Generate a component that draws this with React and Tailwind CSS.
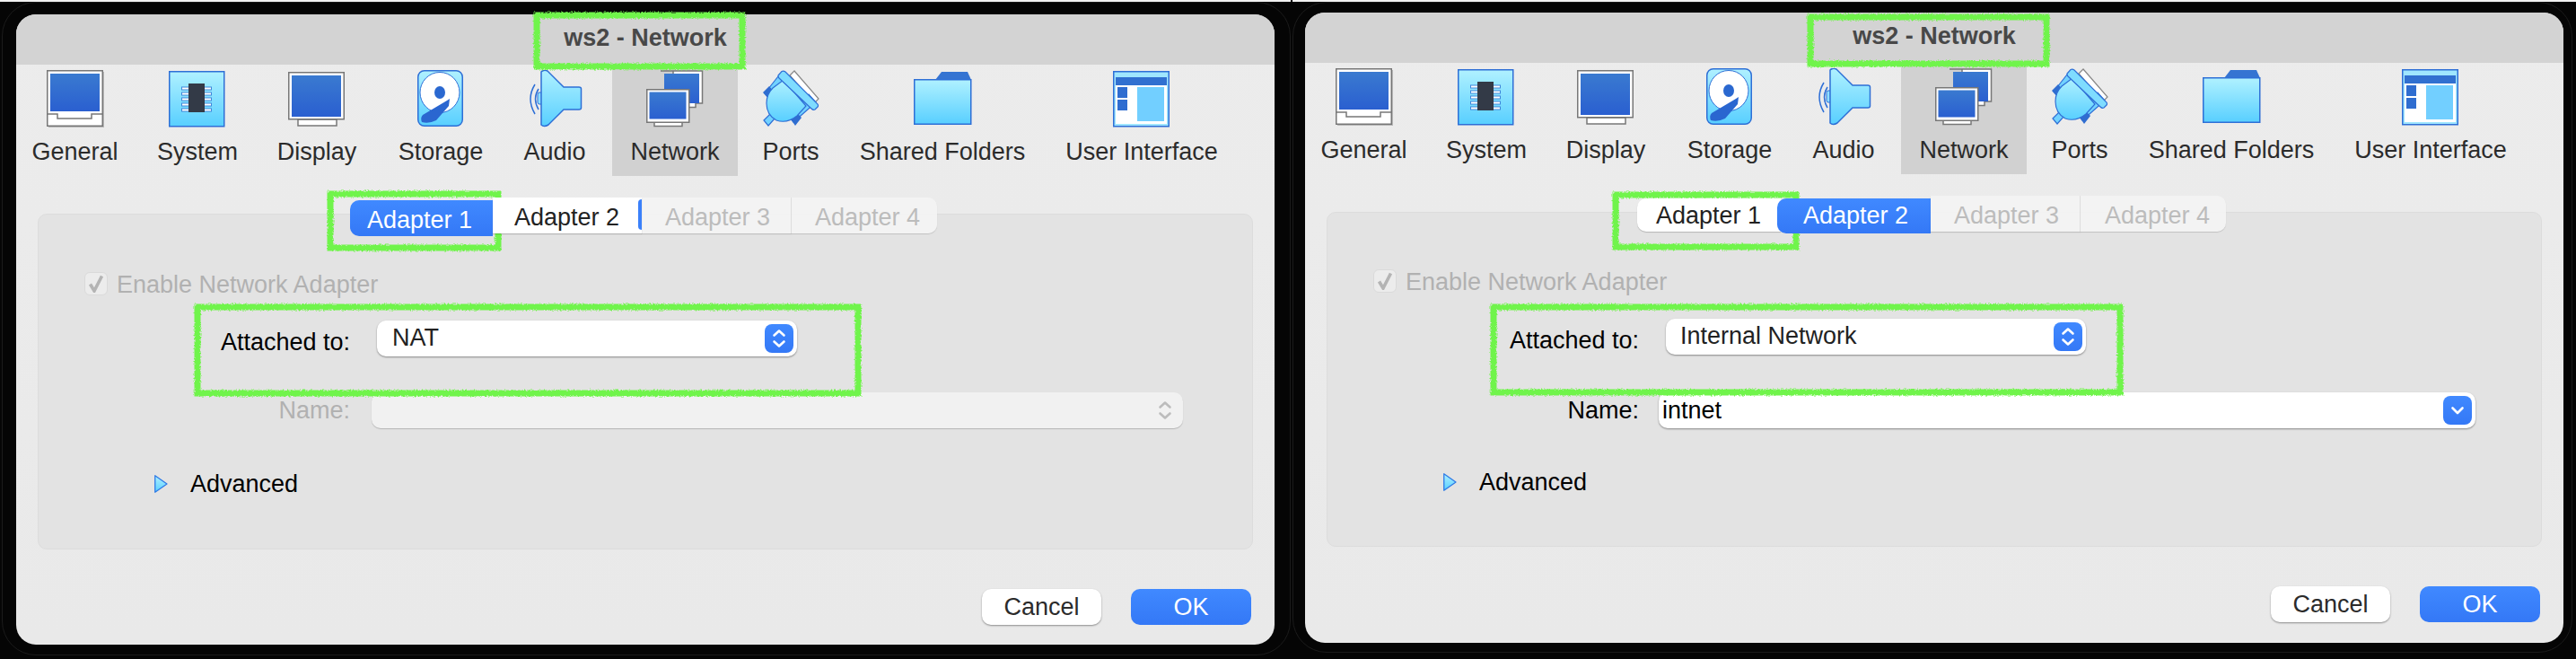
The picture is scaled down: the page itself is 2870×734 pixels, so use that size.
import React from "react";

function Defs() {
    return (
        <svg width="0" height="0" className="absolute">
            <defs>
                <linearGradient id="screen" x1="0" y1="0" x2="0" y2="1">
                    <stop offset="0" stopColor="#3a7ad0" />
                    <stop offset="1" stopColor="#2a5fd0" />
                </linearGradient>
                <linearGradient id="sky" x1="0" y1="0" x2="0" y2="1">
                    <stop offset="0" stopColor="#b0f1ff" />
                    <stop offset="1" stopColor="#58cfff" />
                </linearGradient>
                <filter id="rough" x="-2%" y="-10%" width="104%" height="120%">
                    <feTurbulence type="fractalNoise" baseFrequency="0.55" numOctaves="2" seed="4" />
                    <feDisplacementMap in="SourceGraphic" scale="4" />
                </filter>
            </defs>
        </svg>
    );
}

const GeneralIcon = () => (
    <svg width="64" height="64" viewBox="0 0 64 64">
        <rect x="2" y="2" width="62" height="62" fill="#b8b8b8" />
        <rect x="0.75" y="0.75" width="61.5" height="61.5" fill="#fff" stroke="#777" strokeWidth="1.5" />
        <rect x="4" y="4" width="55" height="42" fill="url(#screen)" />
        <path d="M1 49H12V54H50V49H62" fill="none" stroke="#777" strokeWidth="1.5" />
    </svg>
);

const SystemIcon = () => (
    <svg width="64" height="64" viewBox="0 0 64 64">
        <rect x="0.75" y="1.75" width="61" height="61" fill="url(#sky)" stroke="#2e6fd6" strokeWidth="1.5" />
        {[19, 25, 31, 37, 43].map((y) => (
            <g key={y}>
                <rect x="14.5" y={y} width="33" height="3" fill="#fff" stroke="#3f86da" strokeWidth="1" />
            </g>
        ))}
        <rect x="22" y="15" width="18" height="32" fill="#333a47" />
    </svg>
);

const DisplayIcon = () => (
    <svg width="64" height="64" viewBox="0 0 64 64">
        <path d="M11 55H54V62H11Z" fill="#fff" stroke="#777" strokeWidth="1.5" />
        <rect x="0.75" y="2.75" width="61.5" height="52" fill="#fff" stroke="#777" strokeWidth="1.5" />
        <rect x="4" y="6" width="55" height="46" fill="url(#screen)" />
    </svg>
);

const StorageIcon = () => (
    <svg width="52" height="64" viewBox="0 0 52 64">
        <rect x="0.75" y="0.75" width="49.5" height="61.5" rx="7" fill="url(#sky)" stroke="#2e6fd6" strokeWidth="1.5" />
        <ellipse cx="25" cy="25" rx="22" ry="22.5" fill="#fff" stroke="#2e6fd6" strokeWidth="1" />
        <ellipse cx="25" cy="25" rx="6" ry="7" fill="#2a68d0" />
        <path d="M33 34L36 32L35 40L21 56Q13 60 5 58Q3 53 6 50Z" fill="#2a66d0" />
    </svg>
);

const AudioIcon = () => (
    <svg width="62" height="64" viewBox="0 0 62 64">
        <path d="M9 16Q-1 32 9 49M13 21Q6 32 13 44" fill="none" stroke="#2e6fd6" strokeWidth="1.5" />
        <rect x="12" y="25" width="6" height="13" rx="2" fill="#8fdfff" stroke="#2e6fd6" />
        <path d="M16 2Q19 -1 23 1L41 19H58Q60.5 19 60.5 21V42Q60.5 44 58 44H41L24 61Q19 64 16 61Z" fill="url(#sky)" stroke="#2e6fd6" strokeWidth="1.5" />
    </svg>
);

const NetworkIcon = () => (
    <svg width="64" height="64" viewBox="0 0 64 64">
        <path d="M16 1H62.5V37H55V41.5H30V1Z" fill="#fff" stroke="#777" strokeWidth="1.5" />
        <rect x="20" y="4" width="39" height="33" fill="url(#screen)" />
        <path d="M9 58H40V62.5H9Z" fill="#fff" stroke="#777" strokeWidth="1.5" />
        <rect x="0.75" y="21.75" width="47" height="36.5" fill="#fff" stroke="#777" strokeWidth="1.5" />
        <rect x="3.5" y="24.5" width="41" height="30" fill="url(#screen)" />
    </svg>
);

const PortsIcon = () => (
    <svg width="64" height="64" viewBox="0 0 64 64">
        <path d="M31 6L36 1L63 32L58 37Z" fill="#fff" stroke="#888" strokeWidth="1.2" />
        <path d="M3 26L18 7L27 15L11 34Z" fill="#72d2ff" stroke="#2e6fd6" strokeWidth="1.2" />
        <path d="M1 25L8 18L15 26L8 33Z" fill="#2f6dd0" />
        <path d="M35 58L60 36L52 27L28 50Z" fill="#72d2ff" stroke="#2e6fd6" strokeWidth="1.2" />
        <path d="M30 52L37 46L44 53L37 62Z" fill="#2f6dd0" />
        <path d="M2 56L10 48L15 53L7 62Z" fill="#72d2ff" stroke="#2e6fd6" strokeWidth="1.2" />
        <path d="M24 11L49 40L39 51Q28 60 16 56Q5 50 5 37Q5 27 12 20Z" fill="url(#sky)" stroke="#2e6fd6" strokeWidth="1.2" />
        <path d="M18 6L22 1.5Q24 0.5 26 2L62 38Q63 40 62 41L59 44Q57 45 55 43L19 9Q18 8 18 6Z" fill="#7fdcff" stroke="#2e6fd6" strokeWidth="1.2" />
    </svg>
);

const FolderIcon = () => (
    <svg width="65" height="64" viewBox="0 0 65 64">
        <path d="M24 11L31 2H60L64 11Z" fill="#3574d2" />
        <rect x="0.75" y="10.75" width="63" height="49.5" fill="url(#sky)" stroke="#2e6fd6" strokeWidth="1.5" />
    </svg>
);

const InterfaceIcon = () => (
    <svg width="64" height="64" viewBox="0 0 64 64">
        <rect x="0.75" y="1.75" width="61.5" height="61" fill="#9fe6ff" stroke="#2e6fd6" strokeWidth="1.5" />
        <rect x="3" y="17" width="57" height="43" fill="#fff" />
        <rect x="3" y="8" width="57" height="9" fill="#3170d0" />
        <rect x="5" y="19" width="11" height="12" fill="#2f6dd0" />
        <rect x="5" y="33" width="11" height="12" fill="#2f6dd0" />
        <rect x="27" y="19" width="30" height="38" fill="#72cfff" />
    </svg>
);

const items = [
    { label: "General", Icon: GeneralIcon, width: "w-[131px]" },
    { label: "System", Icon: SystemIcon, width: "w-[142px]" },
    { label: "Display", Icon: DisplayIcon, width: "w-[124px]" },
    { label: "Storage", Icon: StorageIcon, width: "w-[152px]" },
    { label: "Audio", Icon: AudioIcon, width: "w-[102px] mr-[13px]" },
    { label: "Network", Icon: NetworkIcon, width: "w-[140px] bg-[#d1d1d1]" },
    { label: "Ports", Icon: PortsIcon, width: "w-[118px]" },
    { label: "Shared Folders", Icon: FolderIcon, width: "w-[220px]" },
    { label: "User Interface", Icon: InterfaceIcon, width: "w-[224px]" },
];

function Toolbar() {
    return (
        <div className="flex h-[124px]">
            {items.map(({ label, Icon, width }) => (
                <div key={label} className={`flex flex-col items-center pt-[6px] ${width}`}>
                    <div className="h-[64px] flex justify-center"><Icon /></div>
                    <span className="mt-[11px] leading-[32px] text-[#2b2b2b] whitespace-nowrap">{label}</span>
                </div>
            ))}
        </div>
    );
}

const Chevrons = ({ down, up, color = "#fff" }) => (
    <svg width="32" height="32" viewBox="0 0 32 32" fill="none" stroke={color} strokeWidth="2.6" strokeLinecap="round" strokeLinejoin="round">
        {up && <path d="M10.5 12.5L16 7.5L21.5 12.5" />}
        {down && up && <path d="M10.5 19.5L16 24.5L21.5 19.5" />}
        {down && !up && <path d="M10.5 13.5L16 19L21.5 13.5" />}
    </svg>
);

const BlueBox = ({ children }) => (
    <div className="w-[32px] h-[32px] rounded-[8px] bg-gradient-to-b from-[#4089ff] to-[#3478f6]">{children}</div>
);

function Checkbox({ text }) {
    return (
        <div className="flex items-center h-[26px] pl-[51px] gap-[10px]">
            <div className="w-[26px] h-[26px] rounded-[6px] bg-[#ececec] border border-[#dadada] flex items-center justify-center">
                <svg width="18" height="20" viewBox="0 0 18 20" fill="none" stroke="#b4b4b4" strokeWidth="3.6">
                    <path d="M2.5 10.5L7 18L15.5 1.5" />
                </svg>
            </div>
            <span className="text-[#b1b1b1] leading-[30px] mt-[2px]">{text}</span>
        </div>
    );
}

function Advanced({ className }) {
    return (
        <div className={`flex items-center h-[32px] pl-[129px] gap-[25px] text-black ${className}`}>
            <svg width="15" height="20" viewBox="0 0 15 20">
                <path d="M0.75 0.75L14 10L0.75 19.25Z" fill="url(#sky)" stroke="#2e7ae6" strokeWidth="1.3" strokeLinejoin="round" />
            </svg>
            <span>Advanced</span>
        </div>
    );
}

function Footer() {
    return (
        <div className="flex justify-end pr-[26px] gap-[33px] mt-[44px]">
            <button className="w-[133px] h-[40px] rounded-[10px] bg-white text-[#2b2b2b] shadow-[0_1px_2px_rgba(0,0,0,0.4)]">Cancel</button>
            <button className="w-[134px] h-[40px] rounded-[10px] bg-gradient-to-b from-[#4089ff] to-[#3478f6] text-white">OK</button>
        </div>
    );
}

function GreenBox({ className }) {
    return (
        <svg className={`absolute overflow-visible ${className}`} width="100%" height="100%">
            <rect x="3" y="3" width="calc(100% - 6px)" height="calc(100% - 6px)" fill="none" stroke="#70f44c" strokeWidth="7" filter="url(#rough)" />
        </svg>
    );
}

function Window({ className, tabs, panelClass, children, greens, frame }) {
    return (
        <div className={`relative shrink-0 w-[1402px] h-[702px] rounded-[22px] overflow-visible ${className}`}>
            <div className={`absolute border border-[#1b1b1b] rounded-[38px] ${frame}`} />
            <div className="relative h-full rounded-[22px] overflow-hidden bg-gradient-to-b from-[#ececec] to-[#e9e9e9]">
                <div className="h-[56px] bg-[#d3d3d3] flex items-center justify-center font-bold text-[#484848] text-[27px] pb-[3px]">
                    ws2 - Network
                </div>
                <Toolbar />
                <div className="relative z-10 h-[40px] mt-[24px] flex items-start">{tabs}</div>
                <div className={`mx-[24px] -mt-[22px] bg-[#e3e3e3] border border-[#dcdcdc] rounded-[10px] ${panelClass}`}>
                    {children}
                </div>
                <Footer />
            </div>
            {greens}
        </div>
    );
}

const tabBase = "h-[40px] leading-[44px] whitespace-nowrap";
const offTab = "bg-[#f4f4f4]/90 text-[#bcbcbc] shadow-[0_1px_1px_rgba(0,0,0,0.15)]";

const LeftTabs = (
    <>
        <div className="w-[372px] shrink-0" />
        <div className={`${tabBase} mt-[3px] w-[159px] pl-[19px] rounded-l-[10px] bg-gradient-to-b from-[#4089ff] to-[#3478f6] text-white`}>Adapter 1</div>
        <div className={`${tabBase} relative w-[166px] pl-[24px] bg-white text-[#222] shadow-[0_1px_1px_rgba(0,0,0,0.2)]`}>
            Adapter 2
            <div className="absolute right-0 top-[2px] w-[4px] h-[34px] rounded-l-[4px] bg-[#3a80fa]" />
        </div>
        <div className={`${tabBase} w-[167px] pl-[26px] border-r border-[#e0e0e0] ${offTab}`}>Adapter 3</div>
        <div className={`${tabBase} w-[162px] pl-[26px] rounded-r-[10px] ${offTab}`}>Adapter 4</div>
    </>
);

const RightTabs = (
    <>
        <div className="w-[370px] shrink-0" />
        <div className={`${tabBase} !h-[37px] !leading-[38px] mt-[3px] w-[160px] pl-[21px] rounded-l-[10px] bg-white text-[#222] shadow-[0_1px_1px_rgba(0,0,0,0.2)]`}>Adapter 1</div>
        <div className={`${tabBase} !h-[39px] !leading-[38px] mt-[3px] -ml-[4px] w-[171px] pl-[29px] rounded-l-[10px] bg-gradient-to-b from-[#4089ff] to-[#3478f6] text-white`}>Adapter 2</div>
        <div className={`${tabBase} w-[167px] pl-[26px] border-r border-[#e0e0e0] ${offTab}`}>Adapter 3</div>
        <div className={`${tabBase} w-[162px] pl-[27px] rounded-r-[10px] ${offTab}`}>Adapter 4</div>
    </>
);

function LeftFields() {
    return (
        <>
            <Checkbox text="Enable Network Adapter" />
            <div className="flex mt-[28px]">
                <span className="w-[347px] text-right text-black leading-[40px] pt-[4px]">Attached to:</span>
                <div className="ml-[30px] w-[468px] h-[40px] rounded-[10px] bg-white shadow-[0_1px_2px_rgba(0,0,0,0.4)] flex items-center justify-between pl-[17px] pr-[4px]">
                    <span className="text-[#222] pb-[1px]">NAT</span>
                    <BlueBox><Chevrons up down /></BlueBox>
                </div>
            </div>
            <div className="flex mt-[36px]">
                <span className="w-[347px] text-right text-[#b1b1b1] leading-[40px]">Name:</span>
                <div className="ml-[24px] w-[904px] h-[40px] rounded-[10px] bg-[#f1f1f1] shadow-[0_1px_1px_rgba(0,0,0,0.2)] flex items-center justify-end pr-[4px]">
                    <Chevrons up down color="#bcbcbc" />
                </div>
            </div>
            <Advanced className="mt-[46px]" />
        </>
    );
}

function RightFields() {
    return (
        <>
            <Checkbox text="Enable Network Adapter" />
            <div className="flex mt-[29px]">
                <span className="w-[347px] text-right text-black leading-[40px] pt-[4px]">Attached to:</span>
                <div className="ml-[30px] w-[468px] h-[40px] rounded-[10px] bg-white shadow-[0_1px_2px_rgba(0,0,0,0.4)] flex items-center justify-between pl-[16px] pr-[4px]">
                    <span className="text-[#222] pb-[1px]">Internal Network</span>
                    <BlueBox><Chevrons up down /></BlueBox>
                </div>
            </div>
            <div className="flex mt-[38px]">
                <span className="w-[347px] text-right text-black leading-[40px]">Name:</span>
                <div className="ml-[22px] w-[910px] h-[40px] rounded-[10px] bg-white shadow-[0_1px_2px_rgba(0,0,0,0.4)] flex items-center justify-between pl-[4px] pr-[4px]">
                    <span className="text-black">intnet</span>
                    <BlueBox><Chevrons down /></BlueBox>
                </div>
            </div>
            <Advanced className="mt-[44px]" />
        </>
    );
}

export default function App() {
    return (
        <div className="w-[2870px] h-[734px] overflow-hidden bg-[#050505] text-[27px] font-['Liberation_Sans',sans-serif]">
            <Defs />
            <div className="flex h-[2px]">
                <div className="w-[1438px] bg-[#f2f2f2]" />
                <div className="w-[2px]" />
                <div className="flex-1 bg-[#f2f2f2]" />
            </div>
            <div className="flex items-start">
                <Window
                    className="ml-[18px] mt-[14px]"
                    frame="-left-[16px] -right-[18px] -top-[14px] -bottom-[12px]"
                    tabs={LeftTabs}
                    panelClass="h-[374px] pt-[64px]"
                    greens={
                        <>
                            <GreenBox className="!w-[235px] !h-[63px] left-[577px] -top-[2px]" />
                            <GreenBox className="!w-[193px] !h-[66px] left-[347px] top-[197px]" />
                            <GreenBox className="!w-[742px] !h-[102px] left-[199px] top-[323px]" />
                        </>
                    }
                >
                    <LeftFields />
                </Window>
                <Window
                    className="ml-[34px] mt-[12px]"
                    frame="-left-[14px] -right-[10px] -top-[12px] -bottom-[11px]"
                    tabs={RightTabs}
                    panelClass="h-[373px] pt-[63px]"
                    greens={
                        <>
                            <GreenBox className="!w-[269px] !h-[58px] left-[560px] top-[2px]" />
                            <GreenBox className="!w-[207px] !h-[64px] left-[343px] top-[200px]" />
                            <GreenBox className="!w-[704px] !h-[101px] left-[207px] top-[325px]" />
                        </>
                    }
                >
                    <RightFields />
                </Window>
            </div>
        </div>
    );
}
